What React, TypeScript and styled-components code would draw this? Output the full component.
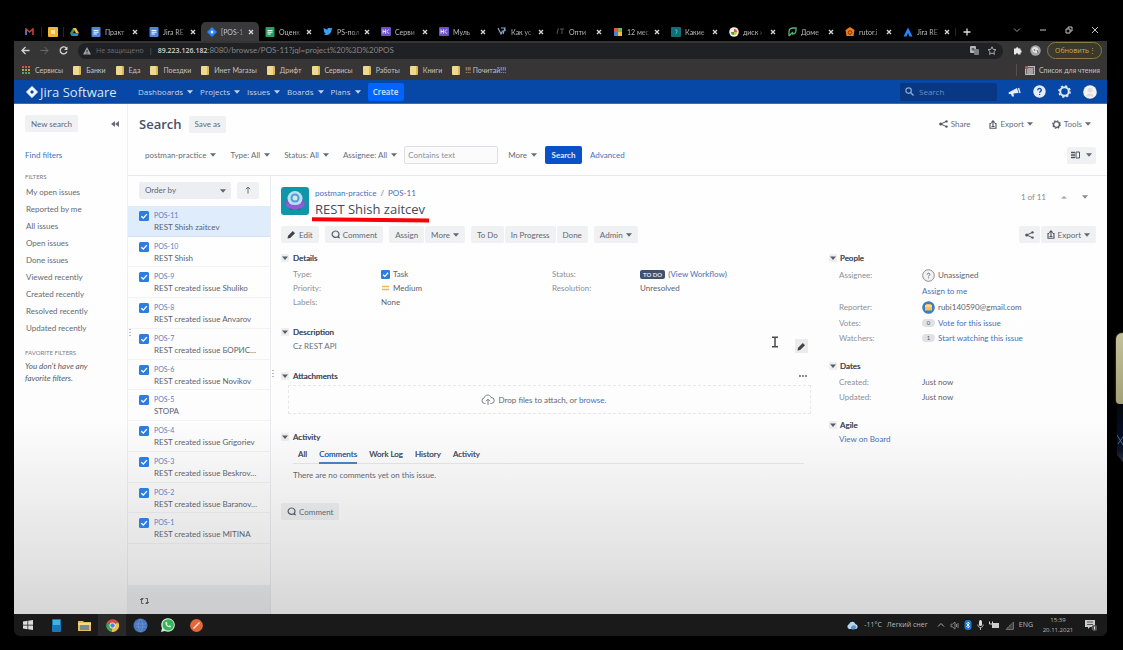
import React from "react";
import styled, { createGlobalStyle, css } from "styled-components";

const UI = `Lato, "Noto Sans", sans-serif`;
const SEGOE = `"Open Sans", "Noto Sans", sans-serif`;

const GlobalStyle = createGlobalStyle`
  *, *::before, *::after { box-sizing: border-box; }
  body { margin: 0; background: #000; font: 8px/14px ${UI}; color: #5f6672; }
  button, input, select { font: inherit; color: inherit; margin: 0; }
  button { border: 0; padding: 0; background: none; }
  a { color: #4571bd; text-decoration: none; }
  h1, h2, p, ul, dl, dd, dt { margin: 0; padding: 0; font: inherit; }
  ul { list-style: none; }
  svg { display: block; flex: none; }
`;

/* ---------- desktop ---------- */

const Desktop = styled.div`
  position: relative;
  min-height: 100vh;
  padding: 22px 16px 14px 14px;
  display: flex;
  flex-direction: column;
  overflow: hidden;
  background: #000;
`;

const EdgeTile = styled.div`
  position: absolute;
  right: 0;
  top: 333px;
  width: 7px;
  height: 71px;
  border-radius: 6px 0 0 4px;
  background: linear-gradient(#c3c29b, #a3a176);
  box-shadow: 0 0 2px #77765a;
`;

const EdgeGlow = styled.svg`
  position: absolute;
  right: 0;
  top: 404px;
`;

/* ---------- browser ---------- */

const TabStrip = styled.div`
  display: flex;
  align-items: center;
  height: 19px;
`;

const Pinned = styled.div`
  display: flex;
  align-items: center;
  justify-content: center;
  width: 22px;
  height: 10px;
  border-right: 1px solid #262626;
  &:first-child { width: 28px; padding-left: 4px; }
  &:nth-child(3) { border: 0; width: 21px; }
`;

const Tab = styled.div<{ $active?: boolean }>`
  display: flex;
  align-items: center;
  gap: 4px;
  width: 58px;
  height: 19px;
  padding: 0 5px 0 6px;
  border-radius: 5px 5px 0 0;
  background: ${(p) => (p.$active ? "#39393b" : "transparent")};
  font: 7px/12px ${UI};
  color: ${(p) => (p.$active ? "#c9c9c9" : "#bdbdbd")};
`;

const TabTitle = styled.span`
  flex: 1;
  white-space: nowrap;
  mask-image: linear-gradient(90deg, #000 60%, rgba(0, 0, 0, 0.3));
`;

const IconButton = styled.button`
  display: flex;
  align-items: center;
  justify-content: center;
  color: inherit;
`;

const NewTab = styled(IconButton)`
  width: 22px;
  color: #ddd;
  border-left: 1px solid #262626;
`;

const WindowButtons = styled.div`
  margin-left: auto;
  display: flex;
  align-items: center;
  gap: 18px;
  padding: 0 8px 4px 0;
  color: #c4c4c4;
`;

const AddressRow = styled.div`
  display: flex;
  align-items: center;
  height: 19px;
  gap: 10px;
  padding: 0 5px 0 7px;
  background: #353536;
  color: #d4d4d4;
`;

const AddressBar = styled.div`
  flex: 1;
  display: flex;
  align-items: center;
  gap: 5px;
  height: 16px;
  padding: 0 4px 0 5px;
  border-radius: 8px;
  background: #202124;
  color: #85868a;
  white-space: nowrap;
`;

const Warning = styled.span` font: 7px/14px ${SEGOE}; color: #6c6d70; `;
const UrlInput = styled.span` flex: 1; b { font: 600 7px/14px ${SEGOE}; color: #d0d0d0; } `;
const PageActions = styled.div` display: flex; align-items: center; gap: 8px; padding-right: 2px; `;
const Extensions = styled.div` display: flex; align-items: center; gap: 8px; `;

const UpdateButton = styled.button`
  display: flex;
  align-items: center;
  justify-content: space-between;
  width: 55px;
  height: 17px;
  padding: 0 5px 0 7px;
  margin-left: -4px;
  border: 1px solid #8b7a45;
  border-radius: 9px;
  background: #3b382d;
  color: #c9ab55;
  font: 7px/12px ${SEGOE};
`;

const Bookmarks = styled.div`
  display: flex;
  align-items: center;
  height: 20px;
  gap: 10px;
  padding: 0 7px 0 8px;
  background: #373536;
  color: #c5c3c4;
  font: 7px/12px ${UI};
  white-space: nowrap;
`;

const Bookmark = styled.span<{ $last?: boolean }>`
  display: flex;
  align-items: center;
  gap: 5px;
  ${(p) => p.$last && css`
    margin-left: auto;
    padding-left: 8px;
    border-left: 1px solid #5a4f50;
    gap: 4px;
  `}
`;

const Folder = styled.i`
  width: 8px;
  height: 9px;
  border-radius: 1px;
  background: linear-gradient(90deg, #efd98a 75%, #d9b955 75%);
`;

/* ---------- Jira header ---------- */

const JiraHeader = styled.header`
  display: flex;
  align-items: center;
  height: 24px;
  padding: 0 10px 0 12px;
  background: #0747a6;
  border-bottom: 1px solid #3d6bb4;
  color: #c3d3ec;
  font: 8px/14px ${SEGOE};
`;

const Brand = styled.a`
  display: flex;
  align-items: center;
  gap: 2px;
  width: 112px;
  color: #dbe5f4;
  font: 13px/18px ${SEGOE};
  white-space: nowrap;
`;

const NavItem = styled.button`
  display: flex;
  align-items: center;
  gap: 4px;
  margin-right: 7px;
`;

const CreateButton = styled.button`
  height: 18px;
  width: 36px;
  border-radius: 2px;
  background: #0065ff;
  color: #cfe2ff;
  font-weight: 600;
`;

const HeaderSearch = styled.label`
  display: flex;
  align-items: center;
  gap: 5px;
  width: 97px;
  height: 18px;
  margin-left: auto;
  padding: 0 5px;
  border-radius: 2px;
  background: #083883;
  color: #8ba7d4;
  input {
    width: 100%;
    border: 0;
    outline: 0;
    background: none;
    padding: 0;
  }
  input::placeholder { color: #6f8dbf; opacity: 1; }
`;

const HeaderIcons = styled.div`
  display: flex;
  align-items: center;
  gap: 12px;
  margin-left: 11px;
  color: #e6edf8;
`;

/* ---------- page ---------- */

const Page = styled.div`
  flex: 1;
  display: flex;
  background: linear-gradient(#fefefe, #fdfdfd 62%, #f3f3f3 72%, #e4e4e4 88%, #d6d6d6);
`;

const Sidebar = styled.aside`
  width: 114px;
  padding: 11px 8px 0 11px;
  border-right: 1px solid rgba(90, 95, 110, 0.1);
`;

const Row = styled.div<{ $between?: boolean; $gap?: number }>`
  display: flex;
  align-items: center;
  gap: ${(p) => p.$gap ?? 0}px;
  justify-content: ${(p) => (p.$between ? "space-between" : "flex-start")};
`;

const Button = styled.button<{ $primary?: boolean }>`
  display: inline-flex;
  align-items: center;
  justify-content: center;
  gap: 3px;
  height: 17px;
  padding: 0 6px;
  border-radius: 2px;
  white-space: nowrap;
  background: ${(p) => (p.$primary ? "#0a50c8" : "rgba(9, 30, 66, 0.06)")};
  color: ${(p) => (p.$primary ? "#e4edfb" : "#626872")};
  font-weight: ${(p) => (p.$primary ? 700 : 400)};
`;

const FindFilters = styled.a`
  display: block;
  margin-top: 16px;
`;

const Caps = styled.h2`
  margin: 8px 0 0;
  font-size: 6px;
  line-height: 14px;
  color: #7a808a;
  text-transform: uppercase;
`;

const FilterList = styled.ul`
  padding-left: 1px;
  margin-bottom: 9px;
  line-height: 17px;
  a { color: #656a73; }
`;

const EmptyNote = styled.p`
  line-height: 12px;
  font-style: italic;
  color: #555b66;
`;

const Main = styled.main`
  flex: 1;
  min-width: 0;
  display: flex;
  flex-direction: column;
`;

const Toolbar = styled.div`
  padding: 11px 11px 0 11px;
  height: 72px;
  border-bottom: 1px solid rgba(9, 30, 66, 0.09);
`;

const PageTitle = styled.h1`
  margin-right: 7px;
  font: 600 13px/18px ${SEGOE};
  color: #45506a;
`;

const Plain = styled.button`
  display: flex;
  align-items: center;
  gap: 4px;
  white-space: nowrap;
  color: #666c77;
`;

const Tools = styled(Row)`
  margin-left: auto;
  gap: 19px;
  padding-right: 5px;
  ${Plain} { gap: 3px; }
`;

const Filters = styled(Row)`
  margin-top: 13px;
  padding-left: 6px;
  gap: 14px;
  & > a { margin-left: -6px; }
`;

const TextInput = styled.input`
  width: 94px;
  height: 18px;
  margin: 0 -4px 0 -7px;
  padding: 0 3px;
  border: 1px solid #dddfe4;
  border-radius: 2px;
  background: #fbfbfc;
  &::placeholder { color: #8d929b; opacity: 1; }
`;

const SearchButton = styled(Button)`
  width: 37px;
  height: 18px;
  margin-left: -6px;
`;

const ViewButton = styled(Button)`
  width: 29px;
  margin-left: auto;
  gap: 6px;
`;

const Split = styled.div`
  flex: 1;
  display: flex;
`;

const ListPanel = styled.section`
  display: flex;
  flex-direction: column;
  width: 143px;
  border-right: 1px solid rgba(9, 30, 66, 0.08);
`;

const OrderRow = styled(Row)`
  gap: 6px;
  height: 30px;
  padding: 0 11px 2px;
`;

const OrderBox = styled.label`
  position: relative;
  width: 92px;
  select {
    width: 100%;
    height: 17px;
    padding: 0 6px;
    appearance: none;
    border: 0;
    border-radius: 2px;
    background: rgba(9, 30, 66, 0.07);
  }
  svg { position: absolute; right: 5px; top: 7px; pointer-events: none; }
`;

const SquareButton = styled(Button)` width: 22px; padding: 0; `;

const IssueList = styled.ul`
  display: grid;
  grid-template-rows: repeat(11, 1fr);
  height: 338px;
`;

const Issue = styled.li<{ $selected?: boolean }>`
  display: flex;
  gap: 5px;
  padding: 3px 10px 0 11px;
  border-bottom: 1px solid rgba(9, 30, 66, 0.05);
  background: ${(p) => (p.$selected ? "#dfecfc" : "transparent")};
  svg { margin-top: 2px; }
`;

const IssueText = styled.a`
  min-width: 0;
  display: block;
  line-height: 12px;
  color: #5c626e;
  span { display: block; font-size: 7px; color: #5b7fc4; }
  em {
    display: block;
    font-style: normal;
    white-space: nowrap;
  }
`;

const ListFooter = styled.div`
  display: flex;
  align-items: center;
  height: 29px;
  margin-top: auto;
  padding: 3px 12px 0;
  background: rgba(9, 20, 50, 0.05);
  color: #5a5e66;
`;

const Grip = styled.i<{ $list?: boolean }>`
  position: absolute;
  left: ${(p) => (p.$list ? 272 : 129)}px;
  top: ${(p) => (p.$list ? 370 : 329)}px;
  width: 2px;
  height: 9px;
  background: repeating-linear-gradient(#b4b8be 0 1px, transparent 1px 3px);
`;

const Detail = styled.section`
  flex: 1;
  min-width: 0;
  padding: 11px 11px 0 10px;
`;

const IssueHead = styled.div`
  display: flex;
  gap: 6px;
  height: 39px;
`;

const HeadText = styled.div`
  position: relative;
  line-height: 12px;
`;

const IssueTitle = styled.h1`
  margin-top: 1px;
  font: 500 13px/19px ${SEGOE};
  color: #434b5c;
`;

const RedLine = styled.svg`
  position: absolute;
  left: -3px;
  top: 30px;
`;

const Pager = styled(Row)`
  margin-left: auto;
  align-items: flex-start;
  gap: 15px;
  padding: 3px 8px 0 0;
  color: #858a93;
  svg { margin-top: 5px; }
`;

const Actions = styled.div`
  display: flex;
  gap: 6px;
`;

const Group = styled.div<{ $right?: boolean }>`
  display: flex;
  gap: 1px;
  margin-left: ${(p) => (p.$right ? "auto" : "0")};
`;

const Columns = styled.div`
  display: flex;
  gap: 18px;
`;

const LeftColumn = styled.div` flex: 1; min-width: 0; `;
const RightColumn = styled.div` width: 267px; `;

const Section = styled.section<{ $top?: number }>`
  position: relative;
  padding: ${(p) => p.$top ?? 8}px 0 0 12px;
`;

const SectionTitle = styled.h2`
  display: flex;
  align-items: center;
  gap: 4px;
  margin-left: -12px;
  height: 14px;
  color: #4b5465;
  font-weight: 500;
  text-shadow: 0 0 0 #4b5465;
`;

const SideTitle = styled(SectionTitle)` margin-left: -10px; gap: 3px; `;
const SideSection = styled(Section)` padding-left: 10px; `;

const Fields = styled.dl<{ $side?: boolean }>`
  display: grid;
  grid-template-columns: ${(p) => (p.$side ? "83px 1fr" : "88px 1fr")};
  row-gap: ${(p) => (p.$side ? "1px" : "0")};
  flex: 1;
  margin-top: 2px;
  line-height: 14px;
  dt { color: #8b9098; }
  dd { display: flex; align-items: center; gap: 3px; white-space: nowrap; color: #5d636e; }
`;

const TwoFields = styled.div` display: flex; align-items: flex-start; `;

const Lozenge = styled.span`
  height: 9px;
  padding: 0 3px;
  border-radius: 2px;
  background: #42526e;
  color: #dfe3ea;
  font: 700 6px/9px ${UI};
`;

const PersonRow = styled.dd` && { height: 16px; } `;
const PersonLabel = styled.dt` line-height: 16px; `;
const Badge = styled.span`
  width: 13px;
  height: 8px;
  border-radius: 4px;
  background: #dfe1e6;
  font-size: 6px;
  line-height: 8px;
  text-align: center;
  color: #555;
`;

const Description = styled.p` color: #6b717b; `;

const EditDescription = styled(IconButton)`
  position: absolute;
  right: 3px;
  bottom: 0;
  width: 13px;
  height: 14px;
  background: #ebebec;
  color: #3f4248;
`;

const TextCursor = styled.svg`
  position: absolute;
  right: 32px;
  bottom: 5px;
`;

const MoreDots = styled(IconButton)` margin-left: auto; margin-right: 4px; color: #666; `;

const DropZone = styled.div`
  display: flex;
  align-items: center;
  justify-content: center;
  gap: 4px;
  height: 29px;
  margin: 2px 0 0 -5px;
  padding-right: 12px;
  border: 1px dashed #e6e7ea;
  color: #616772;
`;

const Tabs = styled.div`
  display: flex;
  gap: 12px;
  height: 18px;
  margin: 2px 7px 0 0;
  padding-left: 5px;
  border-bottom: 1px solid rgba(9, 30, 66, 0.09);
`;

const ActivityTab = styled.button<{ $active?: boolean }>`
  height: 18px;
  padding-bottom: 1px;
  color: ${(p) => (p.$active ? "#3668b5" : "#4f5767")};
  text-shadow: 0 0 0 currentColor;
  border-bottom: 2px solid ${(p) => (p.$active ? "#4d7cc3" : "transparent")};
`;

const Note = styled.p` margin: 4px 0 21px; `;
const FooterButton = styled(Button)` margin-left: -12px; `;

/* ---------- taskbar ---------- */

const Taskbar = styled.footer`
  display: flex;
  align-items: center;
  height: 22px;
  padding-right: 10px;
  border-radius: 0 0 6px 6px;
  background: #1a1a1b;
  color: #b9b9b9;
  font: 7px/10px ${SEGOE};
  white-space: nowrap;
`;

const TaskIcon = styled.button<{ $on?: boolean }>`
  display: flex;
  align-items: center;
  justify-content: center;
  width: 28px;
  height: 22px;
  background: ${(p) => (p.$on ? "#292929" : "none")};
`;

const Tray = styled.div`
  display: flex;
  align-items: center;
  gap: 5px;
  margin-left: auto;
`;

const Weather = styled.span`
  display: flex;
  gap: 5px;
  margin-right: 4px;
  align-items: center;
`;
const Clock = styled.time` width: 40px; text-align: center; font-size: 6px; `;

/* ---------- icons ---------- */

const Caret = ({ w = 6 }: { w?: number }) => (
  <svg width={w} height="4" viewBox="0 0 6 4"><path d="M0 .3h6L3 3.7z" fill="currentColor" /></svg>
);
const CaretUp = () => (
  <svg width="6" height="4" viewBox="0 0 6 4"><path d="M0 3.7h6L3 .8z" fill="#aaadb3" /></svg>
);
const Toggle = () => (
  <svg width="8" height="8" viewBox="0 0 8 8"><rect width="8" height="8" rx="1" fill="rgba(0,0,0,.06)" /><path d="M1 2.5h6L4 6z" fill="#555d6b" /></svg>
);
const Close = () => (
  <svg width="6" height="6" viewBox="0 0 6 6"><path d="M1 1l4 4M5 1L1 5" stroke="#d8d8d8" strokeWidth="1.3" /></svg>
);
const Check = ({ s = 10 }: { s?: number }) => (
  <svg width={s} height={s} viewBox="0 0 10 10"><rect width="10" height="10" rx="1.5" fill="#2b7de1" /><path d="M2.3 5.2l2 1.9 3.6-4" fill="none" stroke="#fff" strokeWidth="1.4" /></svg>
);
const Pencil = () => (
  <svg width="9" height="9" viewBox="0 0 9 9"><path d="M.5 8.5l.6-2.7L5.8 1.1 8 3.2 3.2 7.9z" fill="#3f4248" /></svg>
);
const Bubble = () => (
  <svg width="9" height="9" viewBox="0 0 9 9"><path d="M4.5 1a3.4 3.2 0 1 0 1.7 6L8 7.6l-.7-1.5A3.4 3.2 0 0 0 4.5 1z" fill="none" stroke="#555b66" strokeWidth="1.2" /></svg>
);
const ShareIcon = () => (
  <svg width="9" height="8" viewBox="0 0 9 8"><path d="M7.5 1.3L1.8 4l5.7 2.7" fill="none" stroke="#50565f" /><circle cx="7.5" cy="1.4" r="1.2" fill="#50565f" /><circle cx="1.7" cy="4" r="1.5" fill="#50565f" /><circle cx="7.5" cy="6.6" r="1.2" fill="#50565f" /></svg>
);
const ExportIcon = () => (
  <svg width="8" height="9" viewBox="0 0 8 9"><path d="M2.3 3.5H1v4.8h6V3.5H5.7M4 6V1M2.3 2.6L4 .9l1.7 1.7M2.5 6.5h3" fill="none" stroke="#50565f" strokeWidth="1.1" /></svg>
);
const Gear = ({ s = 9, c = "#555b66" }: { s?: number; c?: string }) => (
  <svg width={s} height={s} viewBox="0 0 12 12"><circle cx="6" cy="6" r="3.9" fill="none" stroke={c} strokeWidth="1.8" /><circle cx="6" cy="6" r="5.1" fill="none" stroke={c} strokeWidth="1.5" strokeDasharray="2 2" /></svg>
);
const DocIcon = ({ c, inner = "#fff" }: { c: string; inner?: string }) => (
  <svg width="10" height="10" viewBox="0 0 10 10"><rect x=".5" width="9" height="10" rx="1" fill={c} /><path d="M2.5 3.5h5M2.5 5.2h5M2.5 7h3.3" stroke={inner} strokeWidth="1" /></svg>
);
const Diamond = ({ s = 10, c = "#2684ff", hole = "#fff" }: { s?: number; c?: string; hole?: string }) => (
  <svg width={s} height={s} viewBox="0 0 12 12"><path d="M6 .3L11.7 6 6 11.7.3 6z" fill={c} stroke={c} strokeWidth=".6" strokeLinejoin="round" /><path d="M6 4l2 2-2 2-2-2z" fill={hole} /></svg>
);
const Hc = () => (
  <svg width="10" height="9" viewBox="0 0 10 9"><rect width="10" height="9" rx="1" fill="#6b4fc8" /><path d="M2 2.3v4.4M4.4 2.3v4.4M2 4.5h2.4M8.2 3a1.5 1.7 0 1 0 0 3" fill="none" stroke="#e6defa" strokeWidth="1" /></svg>
);
const Chrome = ({ s = 11 }: { s?: number }) => (
  <svg width={s} height={s} viewBox="0 0 12 12"><path d="M6 6L1 3a6 6 0 0 1 10.2 0z" fill="#d94b3d" /><path d="M6 6L1 3a6 6 0 0 0 4.3 9z" fill="#3fa457" /><path d="M6 6l5.2-3A6 6 0 0 1 5.3 12z" fill="#eebf42" /><circle cx="6" cy="6" r="2.7" fill="#eee" /><circle cx="6" cy="6" r="2" fill="#4a83dd" /></svg>
);
const Drive = () => (
  <svg width="9" height="8" viewBox="0 0 9 8"><path d="M3 0h3L3 5.3 1.6 8 0 5.3z" fill="#2fa05a" /><path d="M3 0h3l3 5.3H6z" fill="#f1bd35" /><path d="M3 5.3h6L7.5 8h-6z" fill="#4783e0" /></svg>
);

const tabs: [React.ReactNode, string, boolean?][] = [
  [<DocIcon c="#4a86e8" />, "Практ"],
  [<DocIcon c="#4a86e8" />, "Jira RE"],
  [<Diamond />, "[POS-1", true],
  [<DocIcon c="#1fa463" />, "Оценк"],
  [<svg width="10" height="9" viewBox="0 0 10 9"><path d="M.5 1l3.700 1.800C4.400.8 6.500.2 7.600 1.300L9.500 1 8.600 2.700C8.500 6.500 5 9 .5 7.600l2.400-.9C1.500 6 1 5 1 4.500z" fill="#38a1f3" /></svg>, "PS-пол"],
  [<Hc />, "Серви"],
  [<Hc />, "Муль"],
  [<svg width="10" height="9" viewBox="0 0 10 9"><path d="M1 1l3 6 1.500-3L9 3M4 1h4L6 7" fill="none" stroke="#8ba9c4" strokeWidth="1.200" /></svg>, "Как ус"],
  [<svg width="10" height="9" viewBox="0 0 10 9"><path d="M2 7l1-5h1M5 2h4M7 2v5" fill="none" stroke="#555" /></svg>, "Опти"],
  [<svg width="10" height="9" viewBox="0 0 10 9"><path d="M1 1h4v4H1z" fill="#e2553f" /><path d="M5 1h4v4H5z" fill="#7ab648" /><path d="M1 5h4v4H1z" fill="#3e82d8" /><path d="M5 5h4v4H5z" fill="#f1bd35" /></svg>, "12 мес"],
  [<svg width="10" height="10" viewBox="0 0 10 10"><rect width="10" height="10" rx="1" fill="#136d77" /><path d="M4 3h2v2L4.500 7" fill="none" stroke="#45b8bf" /></svg>, "Какие"],
  [<svg width="10" height="10" viewBox="0 0 10 10"><circle cx="5" cy="5" r="4.800" fill="#eee" /><path d="M5 2a3 3 0 0 1 3 3H5z" fill="#e2553f" /><path d="M2 5a3 3 0 0 0 3 3V5z" fill="#3fa457" /><path d="M5 5h3a3 3 0 0 1-3 3z" fill="#e9b93c" /></svg>, "диск ›"],
  [<svg width="10" height="10" viewBox="0 0 10 10"><path d="M2 9V4.500C2 2 4 1 6 1h3v2.500C9 6 7 7 5 7M2 9l4-4" fill="none" stroke="#53b57c" strokeWidth="1.300" /></svg>, "Доме"],
  [<svg width="10" height="10" viewBox="0 0 10 10"><path d="M5 0l4.500 3L8.500 9h-7L.5 3z" fill="#ef7b1c" /><circle cx="5" cy="5.500" r="1.800" fill="none" stroke="#7a3403" /></svg>, "rutor.i"],
  [<svg width="10" height="10" viewBox="0 0 10 10"><path d="M5 .5L9.500 9.500H6.500L5 6 3.500 9.500H.5z" fill="#2684ff" /></svg>, "Jira RE"],
];

const bookmarks = ["Банки", "Еда", "Поездки", "Инет Магазы", "Дрифт", "Сервисы", "Работы", "Книги", "!!! Почитай!!!"];
const filters = ["My open issues", "Reported by me", "All issues", "Open issues", "Done issues", "Viewed recently", "Created recently", "Resolved recently", "Updated recently"];
const issues = [
  "REST Shish zaitcev", "REST Shish", "REST created issue Shuliko", "REST created issue Anvarov",
  "REST created issue БОРИС…", "REST created issue Novikov", "STOPA", "REST created issue Grigoriev",
  "REST created issue Beskrov…", "REST created issue Baranov…", "REST created issue MITINA",
];

export default function App() {
  return (
    <Desktop>
      <GlobalStyle />
      <EdgeTile />
      <EdgeGlow width="6" height="58" viewBox="0 0 6 58">
        <defs><linearGradient id="glow" x2="0" y2="1"><stop stopColor="#05080a" /><stop offset=".4" stopColor="#050b22" /><stop offset=".8" stopColor="#0a1226" /><stop offset="1" stopColor="#2c3238" /></linearGradient></defs>
        <path d="M0 0h6v58L0 51z" fill="url(#glow)" />
        <path d="M0 31l6 10M6 33l-5 7" stroke="#4d6a86" fill="none" />
      </EdgeGlow>

      <TabStrip>
        <Pinned><svg width="9" height="7" viewBox="0 0 9 7"><path d="M1 7V1l3.500 3L8 1v6" fill="none" stroke="#c5412f" strokeWidth="1.600" /><path d="M1 7V2" stroke="#3f7fdc" strokeWidth="1.600" /></svg></Pinned>
        <Pinned><svg width="10" height="10" viewBox="0 0 10 10"><rect width="10" height="10" rx="1" fill="#f2b632" /><path d="M3 3h4v4H3z" fill="#fbe3a4" /></svg></Pinned>
        <Pinned><Drive /></Pinned>
        {tabs.map(([icon, title, active], i) => (
          <Tab key={i} $active={active}>{icon}<TabTitle>{title}</TabTitle><IconButton aria-label="Close tab"><Close /></IconButton></Tab>
        ))}
        <NewTab aria-label="New tab"><svg width="8" height="8" viewBox="0 0 8 8"><path d="M4 .5v7M.5 4h7" stroke="currentColor" strokeWidth="1.300" /></svg></NewTab>
        <WindowButtons>
          <IconButton aria-label="Tab search"><svg width="8" height="8" viewBox="0 0 8 8"><path d="M1 2.500l3 3 3-3" fill="none" stroke="#999" /></svg></IconButton>
          <IconButton aria-label="Minimize"><svg width="8" height="8" viewBox="0 0 8 8"><path d="M1 4h6" stroke="currentColor" /></svg></IconButton>
          <IconButton aria-label="Restore"><svg width="8" height="8" viewBox="0 0 8 8"><path d="M1 3h4v4H1zM3 3V1h4v4H5" fill="none" stroke="currentColor" /></svg></IconButton>
          <IconButton aria-label="Close"><svg width="8" height="8" viewBox="0 0 8 8"><path d="M1 1l6 6M7 1L1 7" stroke="currentColor" /></svg></IconButton>
        </WindowButtons>
      </TabStrip>

      <AddressRow>
        <IconButton aria-label="Back"><svg width="9" height="9" viewBox="0 0 9 9"><path d="M8.500 4.500H1M4.500 1L1 4.500 4.500 8" fill="none" stroke="currentColor" strokeWidth="1.300" /></svg></IconButton>
        <IconButton aria-label="Forward"><svg width="9" height="9" viewBox="0 0 9 9"><path d="M.5 4.500H8M4.500 1L8 4.500 4.500 8" fill="none" stroke="#6b6b6c" /></svg></IconButton>
        <IconButton aria-label="Reload"><svg width="9" height="9" viewBox="0 0 9 9"><path d="M7.600 2.400A3.500 3.500 0 1 0 8 5.500" fill="none" stroke="currentColor" strokeWidth="1.300" /><path d="M8.500.5v3.500H5z" fill="currentColor" /></svg></IconButton>
        <AddressBar>
          <svg width="8" height="8" viewBox="0 0 8 8"><path d="M4 0l4 7.500H0z" fill="#a0a0a2" /><path d="M4 3v2M4 5.700v1" stroke="#202124" /></svg>
          <Warning>Не защищено</Warning><Warning>|</Warning>
          <UrlInput><b>89.223.126.182</b>:8080/browse/POS-11?jql=project%20%3D%20POS</UrlInput>
          <PageActions>
            <svg width="9" height="9" viewBox="0 0 9 9"><rect width="6" height="7" rx="1" fill="#b5b6b8" /><rect x="4" y="3" width="5" height="6" rx="1" fill="#7d7e81" /><path d="M1.500 3h3M3 2v3" stroke="#333" strokeWidth=".8" /></svg>
            <svg width="10" height="9" viewBox="0 0 10 9"><path d="M5 .8l1.200 2.600 2.800.3-2.100 1.900.6 2.800L5 7 2.500 8.400l.6-2.800L1 3.700l2.800-.3z" fill="none" stroke="#b5b6b8" strokeWidth=".9" /></svg>
          </PageActions>
        </AddressBar>
        <Extensions>
          <svg width="9" height="9" viewBox="0 0 9 9"><path d="M1 2.500h2a1.200 1.200 0 1 1 2.400 0H7.500V4.300a1.200 1.200 0 1 1 0 2.400V8.500H5.200a1.200 1.200 0 1 0-2.400 0H1z" fill="#e8e8e8" /></svg>
          <svg width="11" height="11" viewBox="0 0 11 11"><circle cx="5.500" cy="5.500" r="5.200" fill="#a8a8a8" /><path d="M2 4c2-3 5-2 6 0s0 4-2 4-4-2-4-4z" fill="#e3e3e3" /><path d="M4 4l1 2M7 5l1 3" stroke="#666" /></svg>
        </Extensions>
        <UpdateButton>Обновить<span>⋮</span></UpdateButton>
      </AddressRow>

      <Bookmarks>
        <Bookmark><svg width="8" height="8" viewBox="0 0 8 8"><path d="M0 1h8" stroke="#c95a4e" strokeWidth="1.800" strokeDasharray="2 1" /><path d="M0 4h8" stroke="#b5a14e" strokeWidth="1.800" strokeDasharray="2 1" /><path d="M0 7h8" stroke="#5f9f68" strokeWidth="1.800" strokeDasharray="2 1" /></svg>Сервисы</Bookmark>
        {bookmarks.map((b) => <Bookmark key={b}><Folder />{b}</Bookmark>)}
        <Bookmark $last><svg width="10" height="9" viewBox="0 0 10 9"><rect x=".5" y=".5" width="9" height="8" fill="#6b6768" stroke="#bbb" /><path d="M2 3h6M2 5h6M2 7h6" stroke="#ddd" /><path d="M0 0h3v3H0z" fill="#c0504a" /></svg>Список для чтения</Bookmark>
      </Bookmarks>

      <JiraHeader>
        <Brand href="#"><Diamond s={12} c="#f2f6fc" hole="#0747a6" />Jira Software</Brand>
        {["Dashboards", "Projects", "Issues", "Boards", "Plans"].map((n) => <NavItem key={n}>{n}<Caret /></NavItem>)}
        <CreateButton>Create</CreateButton>
        <HeaderSearch>
          <svg width="9" height="9" viewBox="0 0 9 9"><circle cx="3.600" cy="3.600" r="2.700" fill="none" stroke="currentColor" strokeWidth="1.200" /><path d="M5.500 5.500l3 3" stroke="currentColor" strokeWidth="1.400" /></svg>
          <input aria-label="Quick search" placeholder="Search" />
        </HeaderSearch>
        <HeaderIcons>
          <IconButton aria-label="Feedback"><svg width="13" height="12" viewBox="0 0 13 12"><path d="M.5 6.500L9 2l1.500 5-5 .5.500 3H4L3 8 1 8.200z" fill="currentColor" /><path d="M10.500 2l1.500 5" stroke="currentColor" strokeWidth="1.400" /></svg></IconButton>
          <IconButton aria-label="Help"><svg width="13" height="13" viewBox="0 0 13 13"><circle cx="6.500" cy="6.500" r="6.200" fill="currentColor" /><path d="M4.700 5.200c0-2.400 3.700-2.200 3.600 0 0 1.200-1.700 1.200-1.700 2.500M6.600 8.900v1.200" fill="none" stroke="#0747a6" strokeWidth="1.300" /></svg></IconButton>
          <IconButton aria-label="Settings"><Gear s={13} c="#dfe9f8" /></IconButton>
          <IconButton aria-label="Profile"><svg width="14" height="14" viewBox="0 0 14 14"><circle cx="7" cy="7" r="6.800" fill="#f3f2f1" /><circle cx="7" cy="5.200" r="2.400" fill="#e0dedc" /><path d="M3 11.500c.5-4 7.500-4 8 0z" fill="#e0dedc" /></svg></IconButton>
        </HeaderIcons>
      </JiraHeader>

      <Page>
        <Sidebar>
          <Row $between>
            <Button>New search</Button>
            <IconButton aria-label="Collapse sidebar"><svg width="8" height="6" viewBox="0 0 8 6"><path d="M4 0v6L0 3zM8 0v6L4 3z" fill="#6a6f78" /></svg></IconButton>
          </Row>
          <FindFilters href="#">Find filters</FindFilters>
          <Caps>Filters</Caps>
          <FilterList>{filters.map((f) => <li key={f}><a href="#">{f}</a></li>)}</FilterList>
          <Caps>Favorite Filters</Caps>
          <EmptyNote>You don't have any<br />favorite filters.</EmptyNote>
        </Sidebar>

        <Main>
          <Toolbar>
            <Row>
              <PageTitle>Search</PageTitle>
              <Button>Save as</Button>
              <Tools>
                <Plain><ShareIcon />Share</Plain>
                <Plain><ExportIcon />Export<Caret /></Plain>
                <Plain><Gear />Tools<Caret /></Plain>
              </Tools>
            </Row>
            <Filters>
              <Plain>postman-practice<Caret /></Plain>
              <Plain>Type: All<Caret /></Plain>
              <Plain>Status: All<Caret /></Plain>
              <Plain>Assignee: All<Caret /></Plain>
              <TextInput aria-label="Contains text" placeholder="Contains text" />
              <Plain>More<Caret /></Plain>
              <SearchButton $primary>Search</SearchButton>
              <a href="#">Advanced</a>
              <ViewButton aria-label="Layout"><svg width="9" height="8" viewBox="0 0 9 8"><path d="M0 1.500h4M0 4h4M0 6.500h4" stroke="#4f5560" strokeWidth="1.300" /><path d="M5 1h3.500v6H5z" fill="none" stroke="#4f5560" /></svg><Caret /></ViewButton>
            </Filters>
          </Toolbar>

          <Split>
            <ListPanel>
              <OrderRow>
                <OrderBox><select aria-label="Order by" defaultValue="o"><option value="o">Order by</option></select><Caret /></OrderBox>
                <SquareButton aria-label="Sort ascending"><svg width="6" height="8" viewBox="0 0 6 8"><path d="M3 7.500V1M.8 3.200L3 1l2.200 2.200" fill="none" stroke="#6a6f78" /></svg></SquareButton>
              </OrderRow>
              <IssueList>
                {issues.map((t, i) => (
                  <Issue key={i} $selected={i === 0}>
                    <Check />
                    <IssueText href="#"><span>POS-{11 - i}</span><em>{t}</em></IssueText>
                  </Issue>
                ))}
              </IssueList>
              <ListFooter>
                <IconButton aria-label="Refresh"><svg width="9" height="8" viewBox="0 0 9 8"><path d="M3.500 1.500H1.500v5h2M5.500 6.500h2v-5h-2M0 3l1.500-1.500L3 3M6 5l1.500 1.500L9 5" fill="none" stroke="currentColor" /></svg></IconButton>
              </ListFooter>
            </ListPanel>

            <Detail>
              <IssueHead>
                <svg width="28" height="28" viewBox="0 0 28 28"><rect width="28" height="28" rx="3" fill="#0f96a8" /><ellipse cx="14" cy="16.500" rx="10.500" ry="5" fill="#7f56c5" /><path d="M7 18h14l-2 5h-2l-1-2h-4l-1 2H9z" fill="#6743ad" /><circle cx="14" cy="11.500" r="7.500" fill="#b9e0f2" /><circle cx="14" cy="11" r="4.500" fill="#5b9bd0" /><circle cx="14" cy="11" r="2.500" fill="#cfe6f3" /><path d="M5 15c4 4 14 4 18 0 1 6-3 7-9 7s-10-1-9-7z" fill="#8a5fd2" /></svg>
                <HeadText>
                  <Row $gap={4}><a href="#">postman-practice</a>/<a href="#">POS-11</a></Row>
                  <IssueTitle>REST Shish zaitcev</IssueTitle>
                  <RedLine width="118" height="6" viewBox="0 0 118 6"><path d="M0 2.200L117 3.400" stroke="#fb0007" strokeWidth="4" /></RedLine>
                </HeadText>
                <Pager>1 of 11<CaretUp /><Caret /></Pager>
              </IssueHead>

              <Actions>
                <Button><Pencil />Edit</Button>
                <Button><Bubble />Comment</Button>
                <Group><Button>Assign</Button><Button>More <Caret /></Button></Group>
                <Group><Button>To Do</Button><Button>In Progress</Button><Button>Done</Button></Group>
                <Group><Button>Admin <Caret /></Button></Group>
                <Group $right><Button aria-label="Share"><ShareIcon /></Button><Button><ExportIcon />Export <Caret /></Button></Group>
              </Actions>

              <Columns>
                <LeftColumn>
                  <Section>
                    <SectionTitle><Toggle />Details</SectionTitle>
                    <TwoFields>
                      <Fields>
                        <dt>Type:</dt><dd><Check s={9} />Task</dd>
                        <dt>Priority:</dt><dd><svg width="9" height="8" viewBox="0 0 9 8"><path d="M1 2.500h7M1 5.500h7" stroke="#eeb94f" strokeWidth="1.600" /></svg>Medium</dd>
                        <dt>Labels:</dt><dd>None</dd>
                      </Fields>
                      <Fields>
                        <dt>Status:</dt><dd><Lozenge>TO DO</Lozenge><span>(<a href="#">View Workflow</a>)</span></dd>
                        <dt>Resolution:</dt><dd>Unresolved</dd>
                      </Fields>
                    </TwoFields>
                  </Section>
                  <Section $top={16}>
                    <SectionTitle><Toggle />Description</SectionTitle>
                    <Description>Cz REST API</Description>
                    <TextCursor width="8" height="12" viewBox="0 0 8 12"><path d="M1 1.200h6M4 1v10M1 10.800h6" stroke="#4a4a4a" strokeWidth="1.500" /></TextCursor>
                    <EditDescription aria-label="Edit description"><Pencil /></EditDescription>
                  </Section>
                  <Section $top={16}>
                    <SectionTitle><Toggle />Attachments<MoreDots aria-label="Attachment options"><svg width="8" height="2" viewBox="0 0 8 2"><path d="M0 1h8" stroke="currentColor" strokeWidth="1.600" strokeDasharray="2 1" /></svg></MoreDots></SectionTitle>
                    <DropZone>
                      <svg width="14" height="12" viewBox="0 0 14 12"><path d="M4.500 9.500H3.500a2.900 2.900 0 0 1-.2-5.700C4 .300 9 .1 10 3.500a3 3 0 0 1 .5 6H9.300M7 11V5.500M5 7.200l2-2 2 2" fill="none" stroke="#777d87" /></svg>
                      <span>Drop files to attach, or <a href="#">browse.</a></span>
                    </DropZone>
                  </Section>
                  <Section $top={16}>
                    <SectionTitle><Toggle />Activity</SectionTitle>
                    <Tabs>
                      {["All", "Comments", "Work Log", "History", "Activity"].map((t) => <ActivityTab key={t} $active={t === "Comments"}>{t}</ActivityTab>)}
                    </Tabs>
                    <Note>There are no comments yet on this issue.</Note>
                    <FooterButton><Bubble />Comment</FooterButton>
                  </Section>
                </LeftColumn>

                <RightColumn>
                  <SideSection>
                    <SideTitle><Toggle />People</SideTitle>
                    <Fields $side>
                      <PersonLabel>Assignee:</PersonLabel>
                      <PersonRow><svg width="13" height="13" viewBox="0 0 13 13"><circle cx="6.500" cy="6.500" r="5.800" fill="#f2f2f3" stroke="#888d96" /><path d="M5.200 5.500c0-1.800 2.700-1.700 2.600 0 0 .9-1.200.9-1.200 1.900M6.600 8.400v1" fill="none" stroke="#666b74" /></svg>Unassigned</PersonRow>
                      <dt /><dd><a href="#">Assign to me</a></dd>
                      <PersonLabel>Reporter:</PersonLabel>
                      <PersonRow><svg width="13" height="13" viewBox="0 0 13 13"><circle cx="6.500" cy="6.500" r="6.300" fill="#3c7fc0" /><path d="M3 4.500L4.500 3h4L10 4.500v5H3z" fill="#f5c26b" /><path d="M3 5h7" stroke="#fbe5bc" strokeWidth="1.200" /></svg>rubi140590@gmail.com</PersonRow>
                      <dt>Votes:</dt><dd><Badge>0</Badge><a href="#">Vote for this issue</a></dd>
                      <dt>Watchers:</dt><dd><Badge>1</Badge><a href="#">Start watching this issue</a></dd>
                    </Fields>
                  </SideSection>
                  <SideSection $top={14}>
                    <SideTitle><Toggle />Dates</SideTitle>
                    <Fields $side>
                      <dt>Created:</dt><dd>Just now</dd>
                      <dt>Updated:</dt><dd>Just now</dd>
                    </Fields>
                  </SideSection>
                  <SideSection $top={14}>
                    <SideTitle><Toggle />Agile</SideTitle>
                    <a href="#">View on Board</a>
                  </SideSection>
                </RightColumn>
              </Columns>
            </Detail>
          </Split>
        </Main>
      </Page>
      <Grip /><Grip $list />

      <Taskbar>
        <TaskIcon aria-label="Start"><svg width="10" height="10" viewBox="0 0 10 10"><path d="M0 1.400L4.500.8v3.900H0zM5.200.7L10 0v4.700H5.200zM0 5.400h4.500v3.900L0 8.600zM5.200 5.400H10V10l-4.800-.7z" fill="#dcdcdc" /></svg></TaskIcon>
        <TaskIcon aria-label="Phone"><svg width="9" height="13" viewBox="0 0 9 13"><rect width="9" height="13" rx="1" fill="#1878b8" /><rect x="1" y="1" width="7" height="5" fill="#3fb3e6" /></svg></TaskIcon>
        <TaskIcon aria-label="Explorer"><svg width="13" height="11" viewBox="0 0 13 11"><path d="M0 1h5l1 1h7v9H0z" fill="#e4bd57" /><path d="M2 5h9v5H2z" fill="#7b8b94" /><path d="M0 3h13v2H0z" fill="#f3d98c" /></svg></TaskIcon>
        <TaskIcon aria-label="Chrome" $on><Chrome s={13} /></TaskIcon>
        <TaskIcon aria-label="Browser"><svg width="15" height="15" viewBox="0 0 15 15"><circle cx="7.500" cy="7.500" r="7" fill="#4776bd" /><path d="M2 6h11M2.500 9h10M7.500 1c-3 4-3 9 0 13M7.500 1c3 4 3 9 0 13" fill="none" stroke="#6e97d2" strokeWidth=".8" /></svg></TaskIcon>
        <TaskIcon aria-label="WhatsApp"><svg width="14" height="14" viewBox="0 0 14 14"><path d="M0 14l1-3.800A6.800 6.800 0 1 1 3.800 13z" fill="#d5ecd9" /><circle cx="7.200" cy="6.900" r="5.700" fill="#36b557" /><path d="M4.500 4.300c-.5 3 2.500 5.500 5 5.200l.6-1.400-1.500-.8-.8.7c-.9-.4-1.500-1-1.900-1.900l.6-.8-.7-1.500z" fill="#e8f6ea" /></svg></TaskIcon>
        <TaskIcon aria-label="Postman"><svg width="13" height="13" viewBox="0 0 13 13"><circle cx="6.500" cy="6.500" r="6.400" fill="#e2673a" /><path d="M3.500 9.500L8 5l1.500-1.500" stroke="#fbe2d8" strokeWidth="1.500" /></svg></TaskIcon>
        <Tray>
          <Weather>
            <svg width="13" height="9" viewBox="0 0 13 9"><path d="M3 8a2.700 2.700 0 0 1 .2-5C4 .2 8.500-.2 9.300 3A2.600 2.600 0 0 1 10 8z" fill="#b7d6ee" /><path d="M6 8.500a2 2 0 0 1 0-3.500c2-1.500 4 0 4 1s-1 2.500-2 2.500z" fill="#5a97cc" /></svg>
            <span>-11°C</span><span>Легкий снег</span>
          </Weather>
          <svg width="8" height="6" viewBox="0 0 8 6"><path d="M1 4.500l3-3 3 3" fill="none" stroke="#aaa" /></svg>
          <svg width="9" height="9" viewBox="0 0 9 9"><path d="M1 3.200h1.500L5 1v7L2.500 5.800H1zM6.500 3v3M8 2v5" fill="none" stroke="#8c8c8c" strokeWidth=".9" /></svg>
          <svg width="8" height="10" viewBox="0 0 8 10"><rect x=".5" width="7" height="10" rx="3" fill="#1976d2" /><path d="M2.300 3.300l3.300 3.200L4 8V2l1.600 1.500-3.300 3.200" fill="none" stroke="#fff" strokeWidth=".8" /></svg>
          <svg width="7" height="10" viewBox="0 0 7 10"><rect x="2" width="3" height="6" rx="1.500" fill="#ddd" /><path d="M.8 4.500c0 4 5.400 4 5.400 0M3.500 7.500V10" fill="none" stroke="#bbb" /></svg>
          <svg width="11" height="8" viewBox="0 0 11 8"><path d="M3 2h7v5H3z" fill="#ccc" /><path d="M.5.5v2.500h3V.5" fill="none" stroke="#ddd" /></svg>
          <svg width="9" height="9" viewBox="0 0 9 9"><path d="M1 8.500h7.500V1zM3 8V6M5 8V4M7 8V3" fill="none" stroke="#777" strokeWidth=".9" /></svg>
          <span>ENG</span>
          <Clock>15:39<br />20.11.2021</Clock>
          <svg width="14" height="13" viewBox="-2 0 14 13"><path d="M0 1h10v7H5L3 10V8H0z" fill="#ccc" /><path d="M2 3h6M2 5.500h6" stroke="#333" strokeWidth=".8" /><circle cx="9.500" cy="9" r="3" fill="#555" /><path d="M9.500 7.500v3" stroke="#ddd" /></svg>
        </Tray>
      </Taskbar>
    </Desktop>
  );
}
